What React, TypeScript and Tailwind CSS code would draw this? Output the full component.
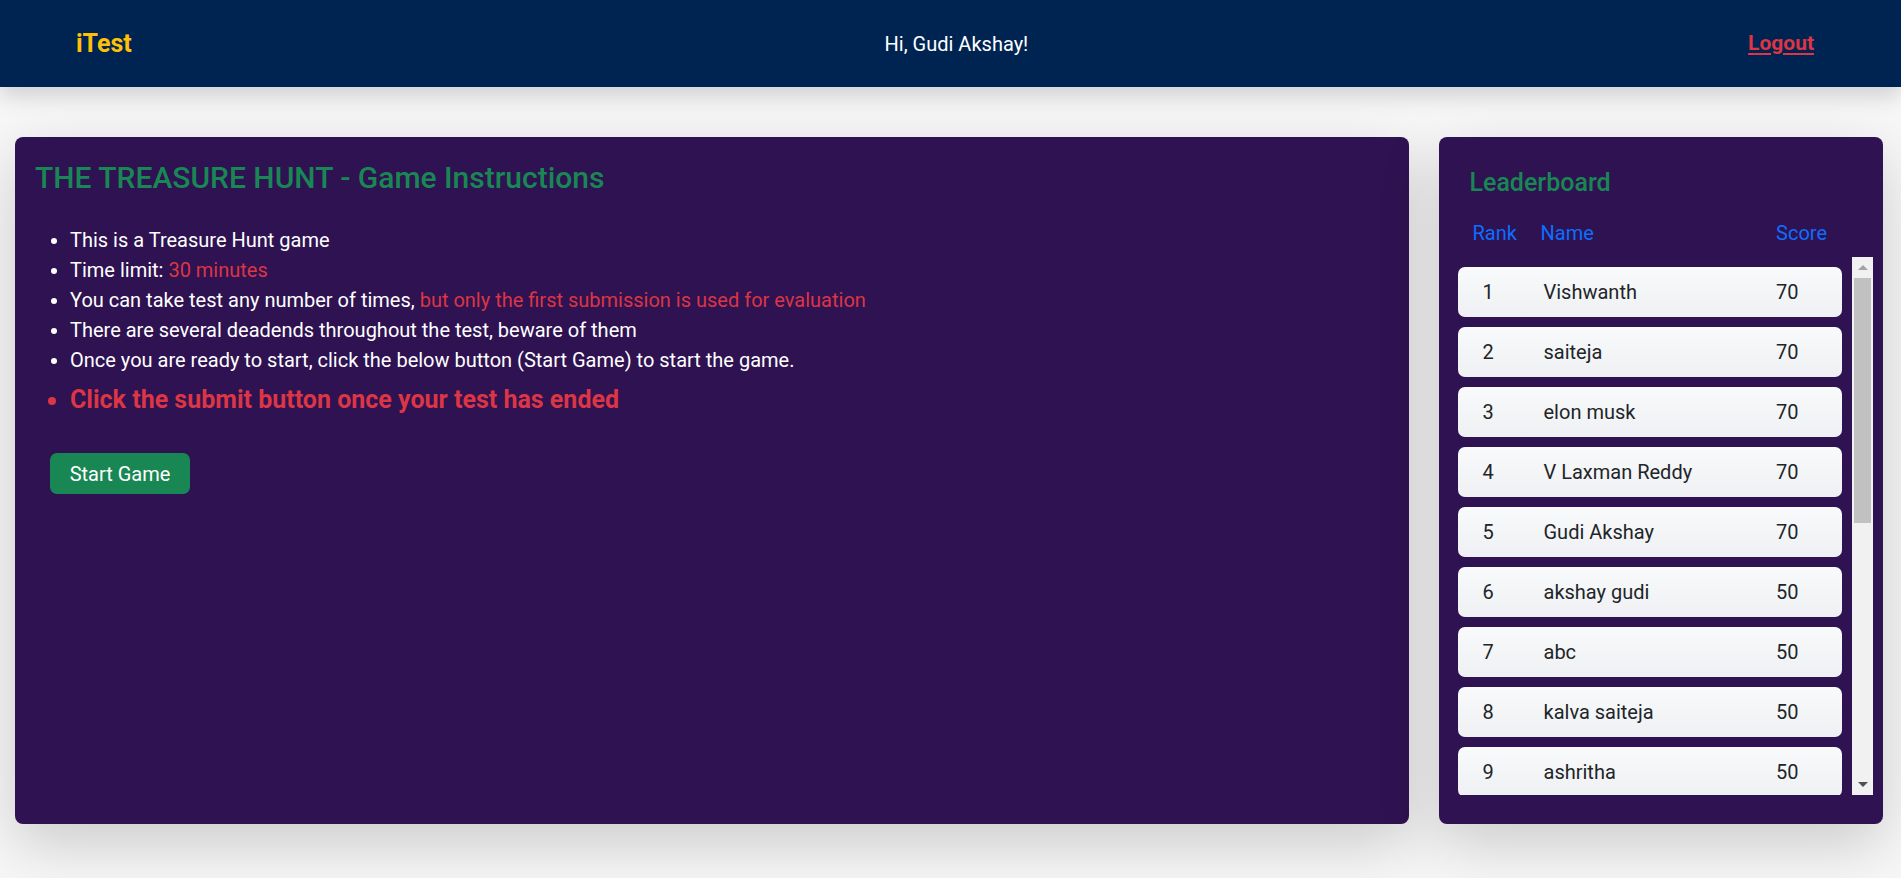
import React from 'react';

const players = [
  { rank: 1, name: 'Vishwanth', score: 70 },
  { rank: 2, name: 'saiteja', score: 70 },
  { rank: 3, name: 'elon musk', score: 70 },
  { rank: 4, name: 'V Laxman Reddy', score: 70 },
  { rank: 5, name: 'Gudi Akshay', score: 70 },
  { rank: 6, name: 'akshay gudi', score: 50 },
  { rank: 7, name: 'abc', score: 50 },
  { rank: 8, name: 'kalva saiteja', score: 50 },
  { rank: 9, name: 'ashritha', score: 50 },
];

const Navbar = () => (
  <nav className="h-[87px] bg-[#002452] flex items-center pl-[76px] pr-[87px] shadow-[0_10px_20px_rgba(0,0,0,0.15)] relative z-10">
    <span className="text-[25px] font-bold text-[#ffc107] leading-none">iTest</span>
    <div className="flex-1 text-center pl-[33px] text-[20px] text-white">Hi, Gudi Akshay!</div>
    <a href="#" className="text-[21px] font-bold text-[#dc3545] underline underline-offset-[3px]">
      Logout
    </a>
  </nav>
);

const Instructions = () => (
  <div className="h-full rounded-[8px] bg-[#2e1251] px-[20px] pt-[23px] pb-[20px] text-white shadow-[0_20px_60px_rgba(0,0,0,0.18)]">
    <h4 className="text-[30px] leading-[36px] font-medium text-[#198754]">THE TREASURE HUNT - Game Instructions</h4>
    <ul className="list-disc pl-[35px] mt-[29px] text-[20px] leading-[30px]">
      <li>This is a Treasure Hunt game</li>
      <li>
        Time limit: <span className="text-[#dc3545]">30 minutes</span>
      </li>
      <li>
        You can take test any number of times,{' '}
        <span className="text-[#dc3545]">but only the first submission is used for evaluation</span>
      </li>
      <li>There are several deadends throughout the test, beware of them</li>
      <li>Once you are ready to start, click the below button (Start Game) to start the game.</li>
      <li className="text-[#dc3545] text-[25px] leading-[30px] font-bold mt-[10px]">
        Click the submit button once your test has ended
      </li>
    </ul>
    <button className="mt-[38px] ml-[15px] w-[140px] h-[41px] rounded-[7px] bg-[#198754] text-white text-[20px]">
      Start Game
    </button>
  </div>
);

const Scrollbar = () => (
  <div className="w-[21px] h-full bg-[#f1f1f1] flex flex-col items-center">
    <div className="h-[21px] flex items-center justify-center">
      <div className="w-0 h-0 border-l-[5px] border-r-[5px] border-b-[5px] border-l-transparent border-r-transparent border-b-[#a3a3a3]" />
    </div>
    <div className="w-[17px] h-[245px] bg-[#c1c1c1]" />
    <div className="flex-1" />
    <div className="h-[21px] flex items-center justify-center">
      <div className="w-0 h-0 border-l-[5px] border-r-[5px] border-t-[5px] border-l-transparent border-r-transparent border-t-[#505050]" />
    </div>
  </div>
);

const Leaderboard = () => (
  <div className="h-full rounded-[8px] bg-[#2e1251] pt-[31px] pb-[29px] pl-[9px] pr-[10px] shadow-[0_20px_60px_rgba(0,0,0,0.18)]">
    <h5 className="pl-[22px] text-[25px] leading-[30px] font-medium text-[#198754]">Leaderboard</h5>
    <div className="mt-[20px] flex text-[20px] leading-[30px] text-[#0d6efd]">
      <span className="pl-[25px] w-[93px]">Rank</span>
      <span className="flex-1">Name</span>
      <span className="pr-[46px]">Score</span>
    </div>
    <div className="mt-[9px] h-[538px] flex">
      <div className="flex-1 overflow-hidden">
        {players.map((p) => (
          <div
            key={p.rank}
            className="mx-[10px] mt-[10px] h-[50px] rounded-[7px] bg-gradient-to-b from-[#f9fafb] to-[#eff0f3] flex items-center text-[20px] text-[#212529]"
          >
            <span className="w-[86px] pl-[25px]">{p.rank}</span>
            <span className="flex-1">{p.name}</span>
            <span className="w-[66px]">{p.score}</span>
          </div>
        ))}
      </div>
      <Scrollbar />
    </div>
  </div>
);

export default function App() {
  return (
    <div className="min-h-[878px] bg-[#f7f7f7]" style={{ fontFamily: 'Roboto, "Open Sans", sans-serif' }}>
      <Navbar />
      <main className="flex pt-[50px] pb-[54px] pr-[3px]">
        <div className="w-3/4 px-[15px]">
          <Instructions />
        </div>
        <div className="w-1/4 px-[15px]">
          <Leaderboard />
        </div>
      </main>
    </div>
  );
}
